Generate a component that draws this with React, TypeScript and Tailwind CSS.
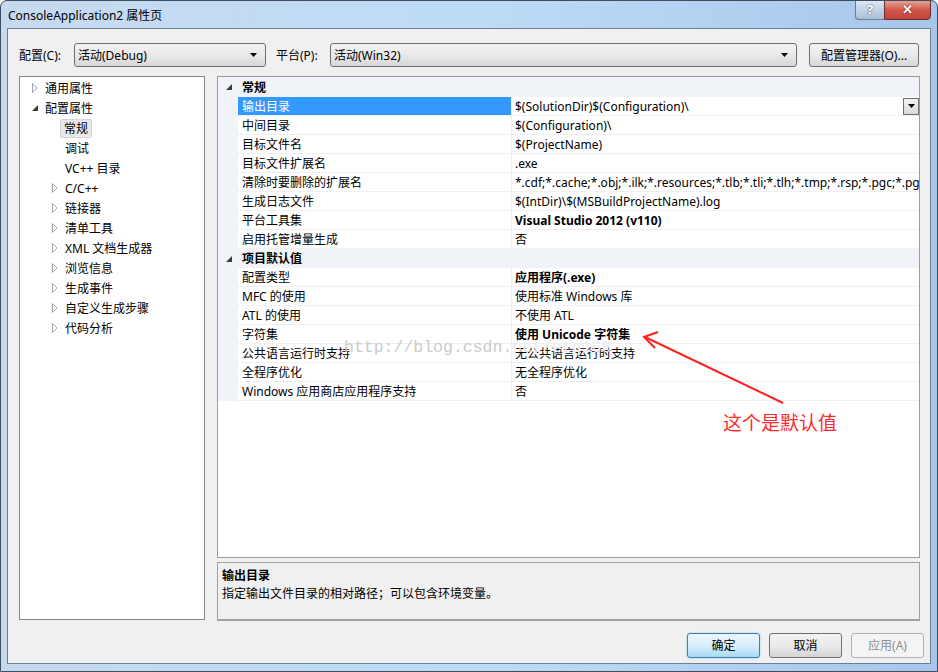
import React from 'react'

const ui = "font-['Noto_Sans','Noto_Sans_CJK_SC',sans-serif]"

type TreeItem = { label: string; level: 0 | 1; exp?: 'open' | 'closed'; selected?: boolean }

const tree: TreeItem[] = [
  { label: '通用属性', level: 0, exp: 'closed' },
  { label: '配置属性', level: 0, exp: 'open' },
  { label: '常规', level: 1, selected: true },
  { label: '调试', level: 1 },
  { label: 'VC++ 目录', level: 1 },
  { label: 'C/C++', level: 1, exp: 'closed' },
  { label: '链接器', level: 1, exp: 'closed' },
  { label: '清单工具', level: 1, exp: 'closed' },
  { label: 'XML 文档生成器', level: 1, exp: 'closed' },
  { label: '浏览信息', level: 1, exp: 'closed' },
  { label: '生成事件', level: 1, exp: 'closed' },
  { label: '自定义生成步骤', level: 1, exp: 'closed' },
  { label: '代码分析', level: 1, exp: 'closed' },
]

type Prop = { name: string; value: string; bold?: boolean; selected?: boolean }

const sections: { title: string; rows: Prop[] }[] = [
  {
    title: '常规',
    rows: [
      { name: '输出目录', value: '$(SolutionDir)$(Configuration)\\', selected: true },
      { name: '中间目录', value: '$(Configuration)\\' },
      { name: '目标文件名', value: '$(ProjectName)' },
      { name: '目标文件扩展名', value: '.exe' },
      {
        name: '清除时要删除的扩展名',
        value:
          '*.cdf;*.cache;*.obj;*.ilk;*.resources;*.tlb;*.tli;*.tlh;*.tmp;*.rsp;*.pgc;*.pgd;*.meta;*.tlog;*.manifest;*.res;*.pch;*.exp;*.idb',
      },
      { name: '生成日志文件', value: '$(IntDir)\\$(MSBuildProjectName).log' },
      { name: '平台工具集', value: 'Visual Studio 2012 (v110)', bold: true },
      { name: '启用托管增量生成', value: '否' },
    ],
  },
  {
    title: '项目默认值',
    rows: [
      { name: '配置类型', value: '应用程序(.exe)', bold: true },
      { name: 'MFC 的使用', value: '使用标准 Windows 库' },
      { name: 'ATL 的使用', value: '不使用 ATL' },
      { name: '字符集', value: '使用 Unicode 字符集', bold: true },
      { name: '公共语言运行时支持', value: '无公共语言运行时支持' },
      { name: '全程序优化', value: '无全程序优化' },
      { name: 'Windows 应用商店应用程序支持', value: '否' },
    ],
  },
]

// small glyphs used by the tree and the grid
const Closed = () => (
  <svg width="6" height="10" viewBox="0 0 6 10">
    <polygon points="0.5,0.5 5,5 0.5,9.5" fill="white" stroke="#a6a6a6" />
  </svg>
)

const Open = () => (
  <svg width="6" height="6" viewBox="0 0 6 6">
    <polygon points="6,0 6,6 0,6" fill="#3c3c3c" />
  </svg>
)

const Caret = () => (
  <svg width="7" height="4" viewBox="0 0 7 4">
    <polygon points="0,0 7,0 3.5,4" fill="#000" />
  </svg>
)

const Combo = ({ text, className }: { text: string; className: string }) => (
  <div
    className={`${className} h-[24px] flex items-center justify-between pl-[3px] pr-[8px] border border-[#707070] rounded-[3px] bg-gradient-to-b from-[#f2f2f2] via-[#e9e9e9] to-[#d7d7d7] text-[12px] text-black`}
  >
    <span className="pt-px">{text}</span>
    <Caret />
  </div>
)

const Tree = () => (
  <div className="w-[186px] h-[544px] bg-white border border-[#838383] pt-[1px]">
    {tree.map((t) => (
      <div
        key={t.label}
        className={`h-[20px] flex items-center text-[12px] text-black ${t.level === 0 ? 'pl-[12px]' : 'pl-[32px]'}`}
      >
        <div className="w-[13px] h-[20px] flex items-center">
          {t.exp === 'closed' && <Closed />}
          {t.exp === 'open' && <Open />}
        </div>
        {t.selected ? (
          <span className="-ml-[5px] h-[19px] px-[3px] pt-px flex items-center border border-[#d6d6d6] rounded-[2px] bg-[#e9e9e9]">
            {t.label}
          </span>
        ) : (
          <span className="pt-px">{t.label}</span>
        )}
      </div>
    ))}
  </div>
)

const Grid = () => (
  <div className="h-[482px] bg-white border border-[#9c9c9c] flex flex-col text-[12px] text-black">
    {sections.map((s, si) => (
      <div key={s.title}>
        <div className={`${si === 0 ? 'h-[20px]' : 'h-[19px]'} flex items-center bg-[#f0f3f8]`}>
          <div className="w-[20px] flex justify-end pr-[6px]">
            <Open />
          </div>
          <span className="pl-[4px] pt-px font-bold">{s.title}</span>
        </div>
        {s.rows.map((r) => (
          <div key={r.name} className="h-[19px] flex">
            <div className="w-[20px] bg-[#f0f3f8]" />
            <div
              className={`w-[274px] flex items-center pl-[4px] pt-px border-r border-b border-[#efefef] ${r.selected ? 'bg-[#3399ff] text-white' : ''}`}
            >
              {r.name}
            </div>
            <div className="flex-1 min-w-0 flex items-center border-b border-[#efefef]">
              <span className={`flex-1 pl-[3px] pt-px whitespace-nowrap overflow-hidden ${r.bold ? 'font-bold' : ''}`}>
                {r.value}
              </span>
              {r.selected && (
                <div className="w-[16px] h-[17px] self-start mt-[0.5px] flex items-center justify-center border border-[#707070] bg-gradient-to-b from-[#f4f4f4] to-[#d9d9d9]">
                  <Caret />
                </div>
              )}
            </div>
          </div>
        ))}
      </div>
    ))}
  </div>
)

export default function App() {
  return (
    <div
      className={`${ui} relative w-[938px] h-[672px] flex flex-col border border-[#3f4d5e] rounded-t-[7px] bg-gradient-to-r from-[#c6daef] via-[#bedcf7] to-[#a8c6ea] overflow-hidden`}
    >
      {/* title bar */}
      <div className="h-[27px] flex justify-between pl-[7px] pr-[6px]">
        <span className="pt-[6px] text-[12px] text-black">ConsoleApplication2 属性页</span>
        <div className="flex -mt-[1px] h-[20px]">
          <div className="w-[29px] flex items-center justify-center border border-[#6d7c8e] border-r-0 rounded-bl-[4px] bg-gradient-to-b from-[#dce8f5] to-[#a9bfd8] text-[13px] font-bold text-white [text-shadow:0_0_2px_#33415a]">
            ?
          </div>
          <div className="w-[47px] flex items-center justify-center border border-[#6b2e2e] rounded-br-[4px] bg-gradient-to-b from-[#e6a196] via-[#d0564a] to-[#c2433a] text-[13px] font-bold text-white [text-shadow:0_0_2px_#4a1010]">
            ✕
          </div>
        </div>
      </div>

      {/* client area */}
      <div className="mx-[6px] h-[636px] border border-[#6f7f93] bg-[#f0f0f0] flex flex-col">
        <div className="pl-[11px] pr-[10px] pt-[14px] flex flex-col">
          <div className="h-[24px] flex items-center text-[12px] text-black">
            <span className="w-[55px] pt-px">配置(C):</span>
            <Combo text="活动(Debug)" className="w-[192px]" />
            <span className="ml-[10px] w-[54px] pt-px">平台(P):</span>
            <Combo text="活动(Win32)" className="w-[467px]" />
            <div className="ml-[12px] w-[110px] h-[24px] pt-px flex items-center justify-center border border-[#707070] rounded-[3px] bg-gradient-to-b from-[#f2f2f2] via-[#e9e9e9] to-[#d7d7d7]">
              配置管理器(O)...
            </div>
          </div>

          <div className="mt-[9px] flex gap-[12px]">
            <Tree />
            <div className="w-[703px] flex flex-col gap-[4px]">
              <Grid />
              <div className="h-[59px] border border-[#a0a0a0] border-b-2 bg-[#f0f0f0] px-[4px] pt-[4px] text-[12px] text-black">
                <div className="font-bold leading-[18px]">输出目录</div>
                <div className="leading-[18px]">指定输出文件目录的相对路径；可以包含环境变量。</div>
              </div>
            </div>
          </div>
        </div>

        <div className="mt-[12px] pr-[6px] flex justify-end gap-[9px] text-[12px]">
          <div className="w-[73px] h-[25px] flex items-center justify-center rounded-[3px] border border-[#3c7fb1] bg-gradient-to-b from-[#eaf6fd] via-[#d9f0fc] to-[#a7d9f5] shadow-[0_0_2px_#7ec4ea] text-black">
            确定
          </div>
          <div className="w-[73px] h-[25px] flex items-center justify-center rounded-[3px] border border-[#707070] bg-gradient-to-b from-[#f2f2f2] via-[#ebebeb] to-[#d4d4d4] text-black">
            取消
          </div>
          <div className="w-[73px] h-[25px] flex items-center justify-center rounded-[3px] border border-[#adb2b5] bg-[#f4f4f4] text-[#8d8d8d]">
            应用(A)
          </div>
        </div>
      </div>

      {/* watermark and annotation drawn over the dialog */}
      <div className="absolute left-[343px] top-[337px] text-[16.5px] leading-[20px] font-['Liberation_Mono',monospace] text-[#cbcbcb] pointer-events-none">
        http://blog.csdn.<span className="text-[#ececec]">net/etg168</span>
      </div>
      <svg className="absolute left-0 top-0 pointer-events-none" width="938" height="672">
        <line x1="782" y1="402" x2="644" y2="336" stroke="#ff2020" strokeWidth="2" />
        <polyline points="657,331 643,336 654,347" fill="none" stroke="#ff2020" strokeWidth="2" />
      </svg>
      <div className="absolute left-[722px] top-[410px] text-[19px] leading-[24px] text-[#ff2a2a] pointer-events-none">
        这个是默认值
      </div>
    </div>
  )
}
